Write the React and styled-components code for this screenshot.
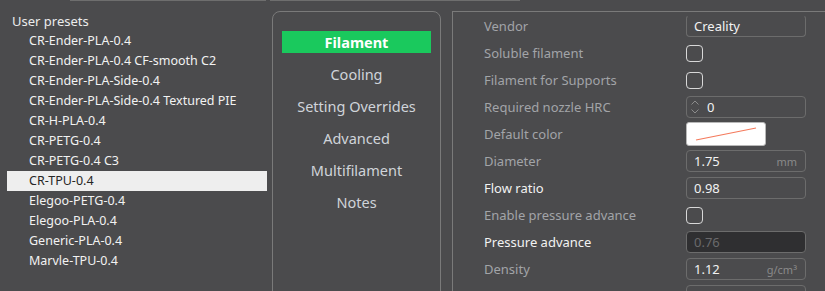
import React from "react";
import styled, { createGlobalStyle } from "styled-components";

const presets = [
  "CR-Ender-PLA-0.4",
  "CR-Ender-PLA-0.4 CF-smooth C2",
  "CR-Ender-PLA-Side-0.4",
  "CR-Ender-PLA-Side-0.4 Textured PIE",
  "CR-H-PLA-0.4",
  "CR-PETG-0.4",
  "CR-PETG-0.4 C3",
  "CR-TPU-0.4",
  "Elegoo-PETG-0.4",
  "Elegoo-PLA-0.4",
  "Generic-PLA-0.4",
  "Marvle-TPU-0.4",
];

const tabs = ["Filament", "Cooling", "Setting Overrides", "Advanced", "Multifilament", "Notes"];

const rows = [
  { label: "Vendor", kind: "text", value: "Creality", noTop: true },
  { label: "Soluble filament", kind: "check" },
  { label: "Filament for Supports", kind: "check" },
  { label: "Required nozzle HRC", kind: "spin", value: "0" },
  { label: "Default color", kind: "color" },
  { label: "Diameter", kind: "text", value: "1.75", unit: "mm" },
  { label: "Flow ratio", kind: "text", value: "0.98", bright: true },
  { label: "Enable pressure advance", kind: "check" },
  { label: "Pressure advance", kind: "text", value: "0.76", bright: true, disabled: true },
  { label: "Density", kind: "text", value: "1.12", unit: "g/cm³" },
  { label: "", kind: "text", value: "" },
];

function Control({ row }) {
  if (row.kind === "check") return <CheckBox />;
  if (row.kind === "color")
    return (
      <Swatch>
        <svg width="78" height="22" viewBox="0 0 78 22">
          <line x1="9" y1="17" x2="69" y2="5" stroke="#f47a5c" strokeWidth="1.2" />
        </svg>
      </Swatch>
    );
  if (row.kind === "spin")
    return (
      <Field>
        <Spin>
          <svg width="10" height="18" viewBox="0 0 10 18">
            <path d="M1.5 6.5 L5 3 L8.5 6.5 M1.5 11.5 L5 15 L8.5 11.5" fill="none" stroke="#8c8c8c" strokeWidth="1" />
          </svg>
        </Spin>
        <Value>{row.value}</Value>
      </Field>
    );
  return (
    <Field $noTop={row.noTop} $disabled={row.disabled}>
      <Value $disabled={row.disabled}>{row.value}</Value>
      {row.unit && <Unit>{row.unit}</Unit>}
    </Field>
  );
}

export default function App() {
  return (
    <>
      <GlobalStyle />
      <TopStrip>
        <TopLine $from={70} $to={266} />
        <TopLine $from={270} $to={520} />
      </TopStrip>
      <Page>
        <PresetList>
          <Header>User presets</Header>
          {presets.map((p) => (
            <Preset key={p} $selected={p === "CR-TPU-0.4"}>
              {p}
            </Preset>
          ))}
        </PresetList>
        <TabPanel>
          {tabs.map((t, i) => (
            <Tab key={t} $active={i === 0}>
              {t}
            </Tab>
          ))}
        </TabPanel>
        <SettingsPanel>
          {rows.map((r, i) => (
            <Row key={i}>
              <Label $bright={r.bright}>{r.label}</Label>
              <Control row={r} />
            </Row>
          ))}
        </SettingsPanel>
      </Page>
    </>
  );
}

const GlobalStyle = createGlobalStyle`
  html, body {
    margin: 0;
    padding: 0;
    background: #4b4b4d;
    overflow: hidden;
  }
  body {
    font-family: "Noto Sans", "Open Sans", sans-serif;
    width: 825px;
    height: 291px;
  }
`;

const TopStrip = styled.div`
  position: relative;
  height: 1px;
`;

const TopLine = styled.div`
  position: absolute;
  top: 0;
  left: ${(p) => p.$from}px;
  width: ${(p) => p.$to - p.$from}px;
  height: 1px;
  background: #6e6e6e;
`;

const Page = styled.div`
  display: flex;
  align-items: flex-start;
  height: 280px;
  overflow: hidden;
  padding-top: 10px;
  padding-left: 7px;
`;

const PresetList = styled.div`
  width: 260px;
  display: flex;
  flex-direction: column;
`;

const Header = styled.div`
  height: 20px;
  line-height: 20px;
  padding-left: 5px;
  font-size: 13px;
  color: #ececec;
`;

const Preset = styled.div`
  height: 20px;
  line-height: 20px;
  padding-left: 22px;
  font-size: 12.5px;
  white-space: nowrap;
  color: ${(p) => (p.$selected ? "#262626" : "#f2f2f2")};
  background: ${(p) => (p.$selected ? "#eeeeee" : "transparent")};
`;

const TabPanel = styled.div`
  margin-left: 5px;
  width: 149px;
  height: 300px;
  padding: 19px 9px 0;
  border: 1px solid #7a7a7a;
  border-radius: 8px;
  display: flex;
  flex-direction: column;
  gap: 10px;
  flex-shrink: 0;
`;

const Tab = styled.div`
  height: 22px;
  line-height: 22px;
  text-align: center;
  font-size: 14.5px;
  font-weight: ${(p) => (p.$active ? 700 : 400)};
  color: ${(p) => (p.$active ? "#ffffff" : "#d0d4da")};
  background: ${(p) => (p.$active ? "#1ac95d" : "transparent")};
`;

const SettingsPanel = styled.div`
  margin-left: 11px;
  flex: 1;
  height: 300px;
  border-top: 1px solid #7a7a7a;
  border-left: 1px solid #7a7a7a;
  padding: 3px 0 0 31px;
  display: flex;
  flex-direction: column;
  gap: 5px;
`;

const Row = styled.div`
  height: 22px;
  flex-shrink: 0;
  display: flex;
  align-items: center;
`;

const Label = styled.div`
  width: 202px;
  flex-shrink: 0;
  font-size: 13px;
  color: ${(p) => (p.$bright ? "#f2f2f2" : "#a2a4a8")};
`;

const Field = styled.div`
  box-sizing: border-box;
  width: 120px;
  height: 22px;
  border: 1px solid #6c6c6c;
  border-top-color: ${(p) => (p.$noTop ? "transparent" : "#6c6c6c")};
  border-radius: 4px;
  background: ${(p) => (p.$disabled ? "#2f2f31" : "transparent")};
  display: flex;
  align-items: center;
  padding: 0 8px 0 7px;
`;

const Value = styled.span`
  flex: 1;
  font-size: 13px;
  color: ${(p) => (p.$disabled ? "#6a6a6c" : "#f2f2f2")};
`;

const Unit = styled.span`
  font-size: 11px;
  color: #8a8a8a;
`;

const Spin = styled.span`
  display: flex;
  margin: 0 7px 0 -4px;
`;

const CheckBox = styled.div`
  box-sizing: border-box;
  width: 17px;
  height: 17px;
  border: 1px solid #d8d8d8;
  border-radius: 4px;
`;

const Swatch = styled.div`
  box-sizing: border-box;
  width: 80px;
  height: 24px;
  background: #ffffff;
  border: 1px solid #b8b8b8;
  border-radius: 3px;
  display: flex;
  align-items: center;
`;
